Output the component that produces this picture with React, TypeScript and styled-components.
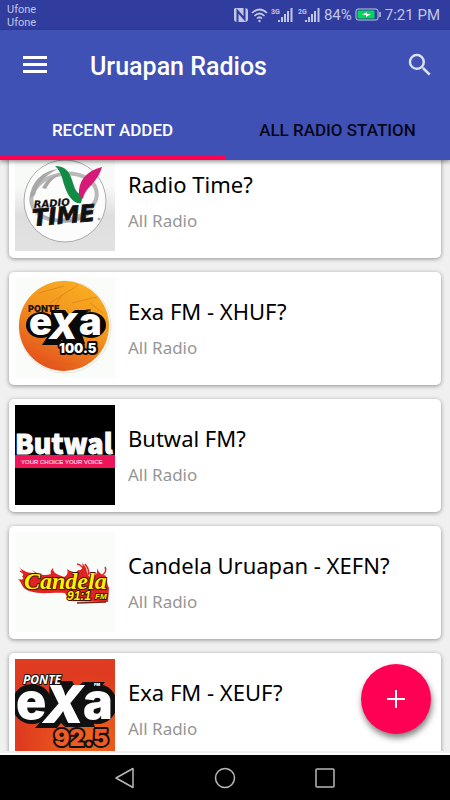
import React from 'react';
import styled, { createGlobalStyle } from 'styled-components';

const GlobalStyle = createGlobalStyle`
  * { box-sizing: border-box; }
  body { margin: 0; background: #f0f0f0; }
  button { border: 0; padding: 0; background: none; cursor: pointer; }
`;

const Screen = styled.div`
  display: flex;
  flex-direction: column;
  height: 100vh;
  overflow: hidden;
  background: #f0f0f0;
  font-family: Roboto, 'Noto Sans', sans-serif;
`;

const StatusBar = styled.div`
  display: flex;
  flex: none;
  align-items: center;
  justify-content: space-between;
  height: 30px;
  padding: 0 10px 0 7px;
  background: #303c9e;
  color: #c2c6e6;
`;

const Carriers = styled.div`
  display: flex;
  flex-direction: column;
  padding-top: 2px;
  font-size: 11px;
  line-height: 13px;
`;

const StatusIcons = styled.div`
  display: flex;
  align-items: center;
  font-size: 15px;
  line-height: 30px;
  svg { flex: none; }
`;

const Clock = styled.span`
  margin-left: 3px;
`;

const Header = styled.header`
  position: relative;
  z-index: 1;
  flex: none;
  background: #3f51b5;
  box-shadow: 0 2px 4px rgba(0, 0, 0, 0.4);
`;

const Toolbar = styled.div`
  display: flex;
  align-items: center;
  height: 70px;
  padding: 0 15px 0 18px;
`;

const IconButton = styled.button`
  display: flex;
  color: ${(p) => p.color ?? '#fff'};
`;

const Title = styled.h1`
  flex: 1;
  margin: 0 0 0 38px;
  padding-top: 3px;
  color: #fff;
  font-size: 25px;
  font-weight: 500;
  line-height: 32px;
`;

const Tabs = styled.div`
  display: grid;
  grid-template-columns: 1fr 1fr;
`;

const Tab = styled.button<{ $active?: boolean }>`
  height: 60px;
  padding-top: 4px;
  border-bottom: 4px solid ${(p) => (p.$active ? '#ff0055' : 'transparent')};
  color: ${(p) => (p.$active ? '#fff' : '#06071a')};
  font: 500 17px/20px Roboto, sans-serif;
`;

const Main = styled.main`
  position: relative;
  flex: 1;
  min-height: 0;
  padding-bottom: 2px;
  border-bottom: 2px solid #fcfcfc;
`;

const Viewport = styled.div`
  height: 100%;
  overflow: hidden;
`;

const StationList = styled.ul`
  display: flex;
  flex-direction: column;
  gap: 14px;
  margin: -15px 9px 0;
  padding: 0;
  list-style: none;
`;

const Card = styled.li`
  display: flex;
  gap: 13px;
  height: 113px;
  padding: 6px;
  border-radius: 5px;
  background: #fff;
  box-shadow: 0 1px 4px rgba(0, 0, 0, 0.4);
`;

const Artwork = styled.svg`
  flex: none;
  width: 100px;
  height: 100px;
`;

const CardText = styled.div`
  padding-top: 17px;
  font-family: 'Noto Sans', sans-serif;
`;

const StationName = styled.h2`
  margin: 0 0 9px;
  color: #000;
  font-size: 22px;
  font-weight: 400;
  line-height: 32px;
`;

const Category = styled.p`
  margin: 0;
  color: #969696;
  font-size: 17px;
  line-height: 24px;
`;

const AddButton = styled.button`
  position: absolute;
  right: 19px;
  bottom: 19px;
  display: flex;
  align-items: center;
  justify-content: center;
  width: 70px;
  height: 70px;
  border-radius: 50%;
  background: #ff0055;
  box-shadow: 1px 4px 6px rgba(0, 0, 0, 0.5);
`;

const NavBar = styled.nav`
  display: grid;
  flex: none;
  grid-template-columns: repeat(3, 100px);
  justify-content: center;
  height: 45px;
  background: #000;
`;

const NavButton = styled.button`
  display: flex;
  align-items: center;
  justify-content: center;
`;

const Signal = ({ label }: { label: string }) => (
  <svg width="27" height="18" viewBox="0 0 27 18" fill="currentColor" aria-hidden="true">
    <text x="1" y="8" fontSize="7" fontWeight="700" fontFamily="Roboto, sans-serif">{label}</text>
    <path d="M8 14h2v2H8zM11 11h2v5h-2zM14 8h2v8h-2zM17 5h2v11h-2zM20.500 2h2v14h-2z" />
  </svg>
);

const RadioTimeArt = () => (
  <Artwork viewBox="0 0 100 100" role="img" aria-label="Radio Time logo">
    <defs>
      <linearGradient id="timeBg" x2="0" y2="1">
        <stop offset="0.350" stopColor="#f8faf8" />
        <stop offset="0.650" stopColor="#dedede" />
        <stop offset="1" stopColor="#e2e2e2" />
      </linearGradient>
    </defs>
    <rect width="100" height="100" fill="url(#timeBg)" />
    <circle cx="50" cy="50" r="41" fill="#fbfcfb" stroke="#989898" strokeWidth="0.800" />
    <ellipse cx="49" cy="46" rx="33" ry="23" fill="none" stroke="#b9b9b9" strokeWidth="4" transform="rotate(-10 49 46)" />
    <path d="M15 47C16 30 28 20 43 18C31 24 23 31 20 44ZM27 64C44 72 67 69 80 57C72 73 43 77 27 64ZM27 37C31 29 38 24 46 23C38 27 34 32 31 38Z" fill="#a8a8a8" />
    <path d="M40 15C50 15 54 20 57 29C60 38 61 43 68 44L66 52C61 54 54 47 51 39C47 29 47 21 40 15Z" fill="#138b45" />
    <path d="M87 16C82 33 70 36 68 48L64 44C63 30 71 20 87 16Z" fill="#d71978" />
    <g fontFamily="DejaVu Sans, sans-serif" fontWeight="700" fontStyle="italic" fill="#111" stroke="#111">
      <text x="19" y="57" fontSize="10" strokeWidth="0.200" transform="rotate(-4 19 57)">RADIO</text>
      <text x="18" y="75" fontSize="23" strokeWidth="0.800" transform="rotate(-5 18 75)">TIME</text>
    </g>
    <circle cx="84" cy="68" r="1" fill="none" stroke="#666" strokeWidth="0.600" />
  </Artwork>
);

const Exa100Art = () => (
  <Artwork viewBox="0 0 100 100" role="img" aria-label="Exa 100.5 logo">
    <defs>
      <linearGradient id="exaOrange" x1="0.800" y1="0" x2="0.300" y2="1">
        <stop stopColor="#fbb01f" />
        <stop offset="0.450" stopColor="#f1951f" />
        <stop offset="1" stopColor="#e44e1c" />
      </linearGradient>
    </defs>
    <rect width="100" height="100" fill="#fafcf9" />
    <circle cx="50" cy="49" r="46" fill="none" stroke="#e6e3d5" />
    <circle cx="49" cy="48" r="45" fill="url(#exaOrange)" />
    <path d="M24 15L49 8M35 25L63 7M57 25L82 19M15 63L37 73M28 82L60 87M68 82L82 72M48 16L38 30M75 25L88 35" stroke="#c9641d" strokeWidth="1" opacity="0.400" />
    <g fill="#090909">
      <ellipse cx="26" cy="47" rx="15" ry="13" />
      <ellipse cx="76" cy="47" rx="15" ry="13" />
      <path d="M36 32H50L54 37L60 32H74L64 46L70 66H50L47 62L43 67H27L36 53Z" />
    </g>
    <g fontFamily="Inter, sans-serif" fontWeight="900">
      <text x="13" y="34" fontSize="9" fill="#24140b">PONTE</text>
      <text x="71" y="34" fontSize="3" fill="#4a250b">FM</text>
      <text y="57" fontSize="38" fill="#fff">
        <tspan x="14">e</tspan>
        <tspan x="34" y="61" fontSize="36" fontStyle="italic">X</tspan>
        <tspan x="64" y="57">a</tspan>
      </text>
      <text x="44" y="75" fontSize="13" fill="#fff" stroke="#090909" strokeWidth="4" strokeLinejoin="round" paintOrder="stroke">100.5</text>
    </g>
  </Artwork>
);

const ButwalArt = () => (
  <Artwork viewBox="0 0 100 100" role="img" aria-label="Butwal logo">
    <rect width="100" height="100" fill="#000" />
    <text x="0" y="49" fontFamily="Noto Sans CJK SC, sans-serif" fontSize="27" fontWeight="900" fill="#fafafa" stroke="#fafafa" strokeWidth="1">Butwal</text>
    <rect y="50" width="100" height="13" fill="#ee1459" />
    <text x="6" y="59" fontFamily="Liberation Sans, sans-serif" fontSize="6" fill="#ffd1de" stroke="#ffd1de" strokeWidth="0.200">YOUR CHOICE YOUR VOICE</text>
  </Artwork>
);

const CandelaArt = () => (
  <Artwork viewBox="0 0 100 100" role="img" aria-label="Candela 91.1 FM logo">
    <rect width="100" height="100" fill="#fafcf9" />
    <path d="M4 35C9 40 14 41 20 41L17 38C24 43 29 44 36 42C35 40 36 38 38 36C38 42 44 43 49 45C53 43 53 40 52 37C58 41 62 41 63 38C66 39 69 36 67 31C74 36 70 42 75 45C80 45 83 42 82 36C84 42 89 44 90 43C93 47 91 50 94 56L93 70L54 69L50 61C35 60 27 63 14 59C6 56 8 52 3 47C7 48 10 48 7 44C9 44 9 41 4 35Z" fill="#de2424" />
    <path d="M62 32Q68 33 70 41M73 43Q75 38 70 32M85 45Q93 40 90 35M5 39L14 45" stroke="#de2424" fill="none" strokeWidth="1.500" />
    <g fontWeight="700" fontStyle="italic" fill="#fff200" stroke="#401309" strokeLinejoin="round">
      <text x="9" y="57" fontFamily="Liberation Serif, serif" fontSize="24" strokeWidth="2" paintOrder="stroke">Candela</text>
      <text x="52" y="68" fontFamily="Liberation Sans, sans-serif" fontSize="12" strokeWidth="2" paintOrder="stroke">91:1</text>
      <text x="80" y="67" fontFamily="Liberation Sans, sans-serif" fontSize="8" strokeWidth="2" paintOrder="stroke">FM</text>
    </g>
    <path d="M62 71L91 70" stroke="#7a2515" strokeWidth="1.500" />
  </Artwork>
);

const Exa92Art = () => (
  <Artwork viewBox="0 0 100 100" role="img" aria-label="Exa 92.5 logo">
    <defs>
      <radialGradient id="exaRed" cx="0.750" cy="0.850" r="0.700">
        <stop stopColor="#ef671b" />
        <stop offset="1" stopColor="#df3b20" />
      </radialGradient>
    </defs>
    <rect width="100" height="100" fill="url(#exaRed)" />
    <g fill="#101010">
      <ellipse cx="17" cy="45" rx="20" ry="20" />
      <ellipse cx="82" cy="45" rx="20" ry="20" />
      <path d="M34 22H57L61 29L68 23H90L72 46L80 68H50L46 64L42 69H20L35 52Z" />
    </g>
    <g fontFamily="Inter, sans-serif" fontWeight="900" strokeLinejoin="round">
      <text y="60" fontSize="50" fill="#fff">
        <tspan x="1">e</tspan>
        <tspan x="28" y="64" fontSize="52" fontStyle="italic">X</tspan>
        <tspan x="68" y="60">a</tspan>
      </text>
      <text x="8" y="25" fontFamily="Open Sans, sans-serif" fontSize="12" fontWeight="700" fontStyle="italic" fill="#fff" stroke="#111" strokeWidth="2" paintOrder="stroke">PONTE</text>
      <text x="79" y="27" fontSize="4" fill="#fff" stroke="#111" strokeWidth="1" paintOrder="stroke">FM</text>
      <text x="39" y="87" fontSize="23" fill="#f05a24" stroke="#111" strokeWidth="4" paintOrder="stroke">92.5</text>
    </g>
  </Artwork>
);

const stations = [
  { name: 'Radio Time?', Art: RadioTimeArt },
  { name: 'Exa FM - XHUF?', Art: Exa100Art },
  { name: 'Butwal FM?', Art: ButwalArt },
  { name: 'Candela Uruapan - XEFN?', Art: CandelaArt },
  { name: 'Exa FM - XEUF?', Art: Exa92Art },
];

export default function App() {
  return (
    <Screen>
      <GlobalStyle />
      <StatusBar>
        <Carriers>
          <span>Ufone</span>
          <span>Ufone</span>
        </Carriers>
        <StatusIcons>
          <svg width="16" height="16" viewBox="0 0 16 16" aria-hidden="true">
            <path d="M2 1H12Q15 1 15 4V12Q15 15 12 15H4Q1 15 1 12V2Z" fill="#c2c6e6" />
            <path d="M4.500 15V4L11.500 12V1" fill="none" stroke="#303c9e" strokeWidth="2" />
          </svg>
          <svg width="21" height="16" viewBox="0 0 21 16" fill="none" stroke="currentColor" strokeWidth="1.700" aria-hidden="true">
            <path d="M3 6Q10.500 -1 18 6M5.500 9Q10.500 4 15.500 9M8 11.500Q10.500 9 13 11.500" />
            <circle cx="10.500" cy="14" r="1.200" fill="currentColor" stroke="none" />
          </svg>
          <Signal label="3G" />
          <Signal label="2G" />
          <span>84%</span>
          <svg width="30" height="14" viewBox="0 0 30 14" aria-hidden="true">
            <rect x="4" y="1" width="22" height="11" rx="2" fill="none" stroke="#c2c6e6" />
            <rect x="5.500" y="2.500" width="17" height="8" fill="#00d85b" />
            <path d="M10 7L15 4V6H19L14 9V7Z" fill="#fff" />
            <path d="M28 4V9" stroke="#c2c6e6" strokeWidth="1.500" />
          </svg>
          <Clock>7:21 PM</Clock>
        </StatusIcons>
      </StatusBar>
      <Header>
        <Toolbar>
          <IconButton type="button" aria-label="Open menu">
            <svg width="34" height="34" viewBox="0 0 34 34" fill="currentColor">
              <path d="M5 8h24v3H5zM5 15h24v3H5zM5 22h24v3H5z" />
            </svg>
          </IconButton>
          <Title>Uruapan Radios</Title>
          <IconButton type="button" aria-label="Search" color="#dce0f4">
            <svg width="30" height="30" viewBox="0 0 24 24" fill="currentColor">
              <path d="M15.500 14h-.79l-.28-.27A6.471 6.471 0 0 0 16 9.500 6.500 6.500 0 1 0 9.500 16c1.610 0 3.090-.59 4.230-1.570l.27.28v.79l5 4.990L20.490 19zm-6 0C7.010 14 5 11.990 5 9.500S7.010 5 9.500 5 14 7.010 14 9.500 11.990 14 9.500 14z" />
            </svg>
          </IconButton>
        </Toolbar>
        <Tabs role="tablist">
          <Tab type="button" role="tab" aria-selected="true" $active>RECENT ADDED</Tab>
          <Tab type="button" role="tab" aria-selected="false">ALL RADIO STATION</Tab>
        </Tabs>
      </Header>
      <Main>
        <Viewport>
          <StationList>
            {stations.map(({ name, Art }) => (
              <Card key={name}>
                <Art />
                <CardText>
                  <StationName>{name}</StationName>
                  <Category>All Radio</Category>
                </CardText>
              </Card>
            ))}
          </StationList>
        </Viewport>
        <AddButton type="button" aria-label="Add station">
          <svg width="18" height="18" viewBox="0 0 18 18" stroke="#fff" strokeWidth="2">
            <path d="M9 0V18M0 9H18" />
          </svg>
        </AddButton>
      </Main>
      <NavBar aria-label="System navigation">
        <NavButton type="button" aria-label="Back">
          <svg width="22" height="22" viewBox="0 0 22 22" fill="none" stroke="#b8b8b8" strokeWidth="1.500" strokeLinejoin="round">
            <path d="M19 1.500V20.500L2 11Z" />
          </svg>
        </NavButton>
        <NavButton type="button" aria-label="Home">
          <svg width="22" height="22" viewBox="0 0 22 22" fill="none" stroke="#b8b8b8" strokeWidth="1.500">
            <circle cx="11" cy="11" r="9.500" />
          </svg>
        </NavButton>
        <NavButton type="button" aria-label="Recent apps">
          <svg width="22" height="22" viewBox="0 0 22 22" fill="none" stroke="#b8b8b8" strokeWidth="1.500">
            <rect x="2" y="2" width="18" height="18" rx="1" />
          </svg>
        </NavButton>
      </NavBar>
    </Screen>
  );
}
